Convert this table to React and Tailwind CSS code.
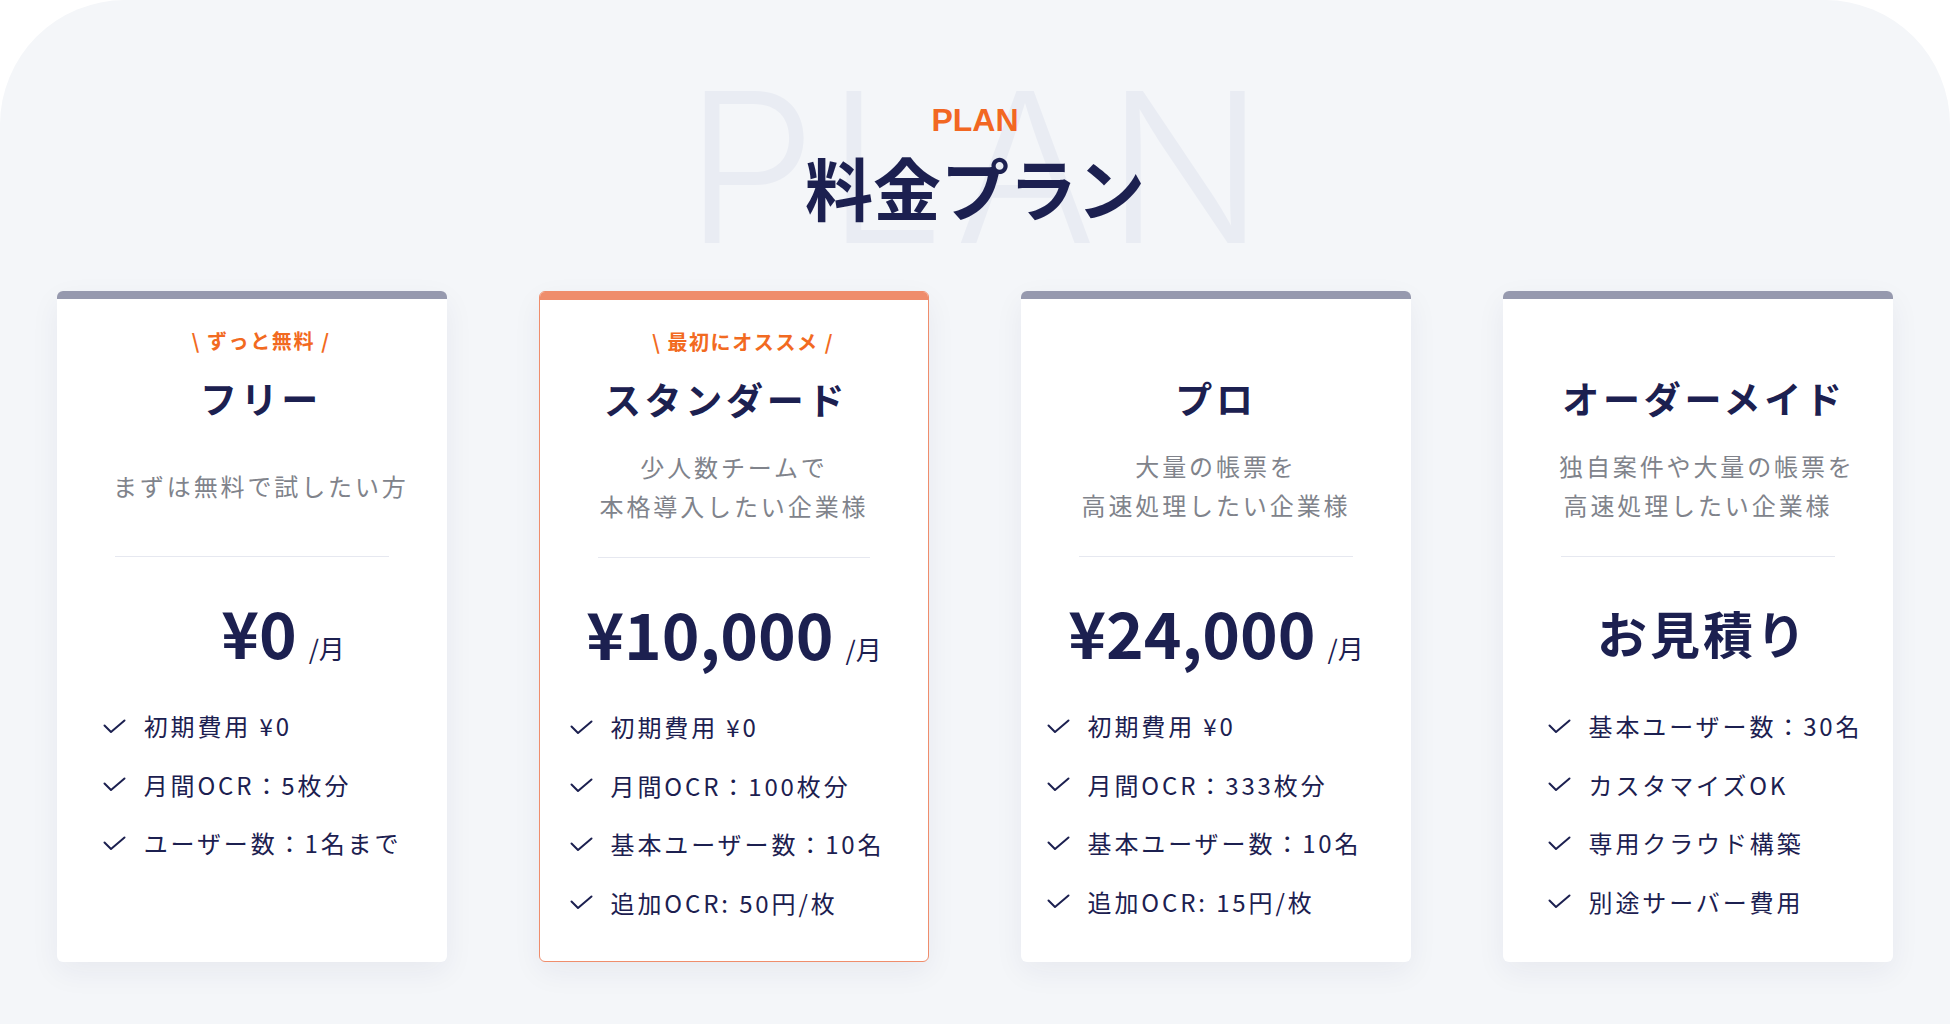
const plans = [
  {
    tag: '\\ ずっと無料 /',
    name: 'フリー',
    desc: ['まずは無料で試したい方'],
    price: '¥0',
    features: ['初期費用 ¥0', '月間OCR：5枚分', 'ユーザー数：1名まで'],
    priceBox: 'pl-[62px]',
    titleBox: 'pl-[18px]',
    listBox: '',
  },
  {
    tag: '\\ 最初にオススメ /',
    name: 'スタンダード',
    desc: ['少人数チームで', '本格導入したい企業様'],
    price: '¥10,000',
    features: ['初期費用 ¥0', '月間OCR：100枚分', '基本ユーザー数：10名', '追加OCR: 50円/枚'],
    featured: true,
    priceBox: '',
    titleBox: 'pr-[16px]',
    listBox: 'pr-[14px]',
  },
  {
    name: 'プロ',
    desc: ['大量の帳票を', '高速処理したい企業様'],
    price: '¥24,000',
    features: ['初期費用 ¥0', '月間OCR：333枚分', '基本ユーザー数：10名', '追加OCR: 15円/枚'],
    priceBox: '',
    titleBox: '',
    listBox: 'pr-[24px]',
  },
  {
    name: 'オーダーメイド',
    desc: ['独自案件や大量の帳票を', '高速処理したい企業様'],
    quote: 'お見積り',
    features: ['基本ユーザー数：30名', 'カスタマイズOK', '専用クラウド構築', '別途サーバー費用'],
    priceBox: 'pl-[10px]',
    titleBox: 'pl-[12px]',
    listBox: 'pl-[14px]',
  },
];

function CheckIcon() {
  return (
    <svg width="23" height="15" viewBox="0 0 23 15" fill="none" className="shrink-0">
      <polyline points="1.5,6.5 8,13 21.5,1.5" stroke="#1c2050" strokeWidth="2" strokeLinecap="round" strokeLinejoin="round" />
    </svg>
  );
}

function PlanCard({ plan }) {
  return (
    <div
      className={`flex w-[390px] flex-col overflow-hidden rounded-[6px] bg-white pb-[43px] shadow-[0_10px_30px_rgba(30,40,90,0.06)] ${
        plan.featured ? 'border-[1.5px] border-[#ef8d6c]' : ''
      }`}
    >
      <div className={`h-[8px] ${plan.featured ? 'bg-[#ef8d6c]' : 'bg-[#9699ae]'}`} />
      <div className="mt-[27px] h-[30px] pl-[18px] text-center text-[20px] font-bold leading-[30px] tracking-[0.08em] text-[#f26a21]">
        {plan.tag}
      </div>
      <h3 className={`mt-[17px] text-center text-[37px] font-bold leading-[50px] tracking-[0.1em] text-[#1c2050] ${plan.titleBox}`}>
        {plan.name}
      </h3>
      <div className="mt-[23px] flex h-[78px] flex-col justify-center px-[56px] text-center text-[24px] leading-[39px] tracking-[0.12em] text-[#80838b]">
        {plan.desc.map((line) => (
          <p key={line} className="whitespace-nowrap">
            {line}
          </p>
        ))}
      </div>
      <div className="mx-[58px] mt-[32px] h-px bg-[#e6e8f0]" />
      {plan.quote ? (
        <div className={`mt-[35px] flex h-[80px] items-center justify-center text-[50px] font-bold tracking-[0.06em] text-[#1c2050] ${plan.priceBox}`}>
          {plan.quote}
        </div>
      ) : (
        <div className={`mt-[35px] flex h-[80px] items-baseline justify-center gap-[12px] text-[#1c2050] ${plan.priceBox}`}>
          <span className="text-[64px] font-bold leading-[78px]">{plan.price}</span>
          <span className="text-[26px]">/月</span>
        </div>
      )}
      <div className={`mt-[39px] flex justify-center ${plan.listBox}`}>
        <ul className="flex flex-col gap-[28.6px]">
          {plan.features.map((f) => (
            <li key={f} className="flex items-center gap-[18px] text-[24px] leading-[30px] tracking-[0.12em] text-[#1c2050]">
              <CheckIcon />
              <span>{f}</span>
            </li>
          ))}
        </ul>
      </div>
    </div>
  );
}

export default function App() {
  return (
    <div className="bg-white font-['Noto_Sans_CJK_JP',sans-serif]">
      <section className="relative min-h-[1024px] overflow-hidden rounded-t-[125px] bg-[#f4f6f9] pb-[60px]">
        <div
          aria-hidden="true"
          className="pointer-events-none absolute left-1/2 top-[63px] -translate-x-1/2 select-none pl-[10px] font-['Inter',sans-serif] text-[209px] font-light leading-none tracking-[0.05em] text-[#e9ecf3]"
        >
          PLAN
        </div>
        <div className="relative flex flex-col items-center pt-[104px]">
          <p className="font-['Liberation_Sans',sans-serif] text-[32px] font-bold leading-[32px] text-[#f26722]">PLAN</p>
          <h2 className="mt-[17px] text-[68px] font-bold leading-[68px] text-[#1c2050]">料金プラン</h2>
        </div>
        <div className="relative mt-[70px] flex items-stretch justify-center gap-[92px]">
          {plans.map((p) => (
            <PlanCard key={p.name} plan={p} />
          ))}
        </div>
      </section>
    </div>
  );
}
